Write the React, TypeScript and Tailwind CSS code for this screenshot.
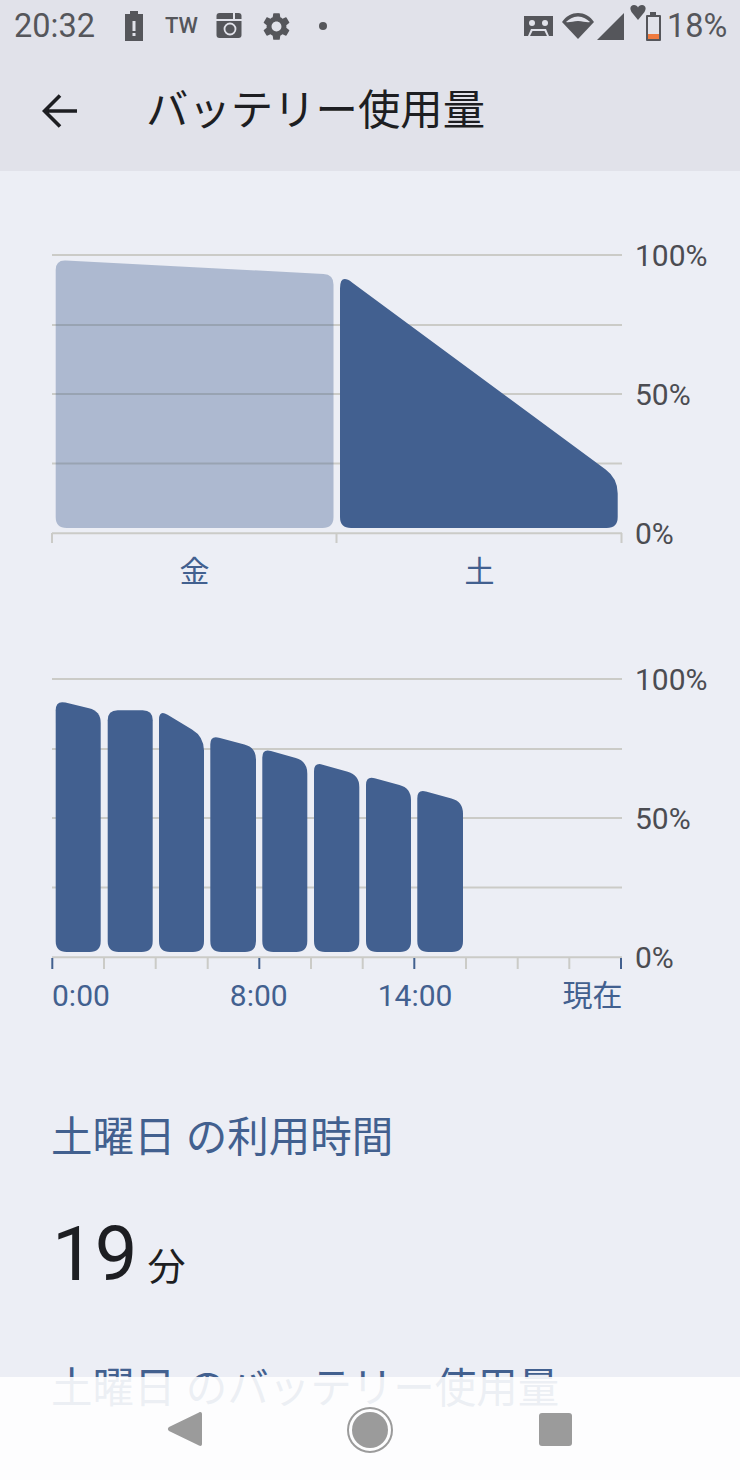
import { MdSettings } from "react-icons/md";

type Pt = [number, number, number];

// polygon with individually rounded corners
function roundedPath(pts: Pt[]) {
  const n = pts.length;
  let d = "";
  pts.forEach(([x, y, r], i) => {
    const [px, py] = pts[(i - 1 + n) % n];
    const [nx, ny] = pts[(i + 1) % n];
    const lp = Math.hypot(px - x, py - y);
    const ln = Math.hypot(nx - x, ny - y);
    const ax = x + ((px - x) / lp) * r;
    const ay = y + ((py - y) / lp) * r;
    const bx = x + ((nx - x) / ln) * r;
    const by = y + ((ny - y) / ln) * r;
    d += `${i === 0 ? "M" : "L"}${ax} ${ay}Q${x} ${y} ${bx} ${by}`;
  });
  return d + "Z";
}

type Bar = { x0: number; x1: number; yl: number; yr: number; rl?: number; rr?: number; faded?: boolean };

const BAR_BOTTOM = 287;
const gridLines = [14, 84, 153, 222.5];

const dayBars: Bar[] = [
  { x0: 55.7, x1: 333.5, yl: 260, yr: 274.5, rl: 10, rr: 10, faded: true },
  { x0: 340, x1: 617.7, yl: 273.5, yr: 478.5, rl: 15, rr: 15 },
];

const hourBars: Bar[] = [
  { x0: 55.7, x1: 100.7, yl: 700.3, yr: 711, rl: 10, rr: 12 },
  { x0: 107.7, x1: 152.7, yl: 710.3, yr: 710.3, rl: 10, rr: 10 },
  { x0: 159, x1: 204, yl: 709.6, yr: 736.6, rl: 10, rr: 14 },
  { x0: 210.3, x1: 256, yl: 735.3, yr: 747.6, rl: 9, rr: 12 },
  { x0: 262.3, x1: 307.3, yl: 748.5, yr: 761.4, rl: 9, rr: 12 },
  { x0: 314, x1: 359.3, yl: 762.2, yr: 774.9, rl: 9, rr: 12 },
  { x0: 366, x1: 411, yl: 775.9, yr: 788, rl: 9, rr: 12 },
  { x0: 417.3, x1: 463, yl: 789.2, yr: 801.5, rl: 9, rr: 12 },
];

const dayTicks = [{ x: 52 }, { x: 336.5 }, { x: 621.5 }];
const hourTicks = [52.3, 104, 155.7, 207.7, 259.3, 311, 362.7, 414.3, 466, 517.7, 569.3, 621].map((x, i) => ({
  x,
  major: i === 0 || i === 4 || i === 7 || i === 11,
}));

function Chart({ bars, top, ticks, tickEnd }: { bars: Bar[]; top: number; ticks: { x: number; major?: boolean }[]; tickEnd: number }) {
  return (
    <div className="flex">
      <svg width={590} height={308} viewBox="0 0 590 308" className="ml-[50px] shrink-0">
        {gridLines.map((y) => (
          <line key={y} x1={2} x2={572} y1={y} y2={y} stroke="#cbcbc7" strokeWidth={2} />
        ))}
        <line x1={2} x2={572} y1={292.3} y2={292.3} stroke="#cbcbc7" strokeWidth={2} />
        {ticks.map((t) => (
          <line
            key={t.x}
            x1={t.x - 50}
            x2={t.x - 50}
            y1={t.major ? 293 : 292}
            y2={tickEnd}
            stroke={t.major ? "#42608f" : "#cbcbc7"}
            strokeWidth={2}
          />
        ))}
        {bars.map((b) => (
          <path
            key={b.x0}
            d={roundedPath([
              [b.x0 - 50, b.yl - top, b.rl ?? 8],
              [b.x1 - 50, b.yr - top, b.rr ?? 8],
              [b.x1 - 50, BAR_BOTTOM, 11],
              [b.x0 - 50, BAR_BOTTOM, 11],
            ])}
            fill="#426090"
            fillOpacity={b.faded ? 0.37 : 1}
          />
        ))}
      </svg>
      <div className="ml-[-5px] flex h-[308px] flex-col justify-between text-[30px] leading-[30px] text-[#4b4c52]">
        <span>100%</span>
        <span>50%</span>
        <span>0%</span>
      </div>
    </div>
  );
}

function StatusBar() {
  return (
    <div className="flex h-[52px] items-center pl-[14px] text-[#55565b]">
      <span className="w-[81px] text-[32.5px] leading-[52px]">20:32</span>
      <svg width={20} height={30} viewBox="0 0 20 30" className="ml-[29px]">
        <path d="M6 0h8v3h5v27H1V3h5z" fill="#55565b" />
        <rect x={8.5} y={10} width={3} height={10} fill="#e1e2ea" />
        <rect x={8.5} y={22} width={3} height={3} fill="#e1e2ea" />
      </svg>
      <span className="ml-[21px] text-[22px] font-medium leading-[52px]">TW</span>
      <svg width={26} height={26} viewBox="0 0 26 26" className="ml-[18px]">
        <rect x={0.5} y={0} width={25} height={25} rx={3} fill="#55565b" />
        <rect x={0} y={6} width={26} height={2} fill="#e1e2ea" />
        <rect x={17} y={0} width={2} height={7} fill="#e1e2ea" />
        <circle cx={14} cy={16} r={5.5} fill="none" stroke="#e1e2ea" strokeWidth={1.8} />
        <rect x={3} y={10} width={3} height={13} fill="#55565b" />
      </svg>
      <MdSettings size={33} className="ml-[18px] text-[#55565b]" />
      <span className="ml-[26px] h-[8px] w-[8px] rounded-full bg-[#55565b]" />
      <svg width={30} height={21} viewBox="0 0 30 21" className="ml-[197px]">
        <path d="M0 0h29v20H25l-3-7H7l-3 7H0z" fill="#55565b" />
        <circle cx={8} cy={7} r={3} fill="#e1e2ea" />
        <circle cx={21} cy={7} r={3} fill="#e1e2ea" />
        <path d="M6 20l2.500-5h12l2.500 5z" fill="#55565b" />
      </svg>
      <svg width={32} height={28} viewBox="0 0 32 28" className="ml-[8px]">
        <path d="M16 27L0 10C4 4 10 1 16 1s12 3 16 9z" fill="#55565b" />
        <path d="M4 10c3-3 7-5.500 12-5.500S25 7 28 10c-3 1-7-1-12-1s-9 2-12 1z" fill="#e1e2ea" />
      </svg>
      <svg width={28} height={27} viewBox="0 0 28 27" className="ml-[3px]">
        <path d="M27 0v27H0z" fill="#55565b" />
      </svg>
      <svg width={34} height={38} viewBox="0 0 34 38" className="ml-[5px] mt-[-8px]">
        <path d="M8 17L1.500 9C-1 5 1 2 4 2c2 0 3.500 1 4 2.500C8.500 3 10 2 12 2c3 0 5 3 2.500 7z" fill="#55565b" />
        <path d="M20 9h6v3h4a1 1 0 011 1v24a1 1 0 01-1 1H17a1 1 0 01-1-1V13a1 1 0 011-1h3z" fill="#55565b" />
        <rect x={18} y={14} width={11} height={22} fill="#e1e2ea" />
        <rect x={18} y={31} width={11} height={5} fill="#ee7a3f" />
      </svg>
      <span className="ml-[3px] text-[32.5px] leading-[52px]">18%</span>
    </div>
  );
}

export default function App() {
  return (
    <div className="relative flex h-[1480px] w-[740px] flex-col overflow-hidden bg-[#eceef5] [font-family:Roboto,'Noto_Sans_CJK_JP',sans-serif]">
      <header className="h-[171px] shrink-0 bg-[#e1e2ea]">
        <StatusBar />
        <div className="flex h-[117px] items-center">
          <svg width={36} height={36} viewBox="0 0 36 36" className="ml-[42px]">
            <path d="M35 18H3M18 2.500L2.500 18 18 33.500" fill="none" stroke="#1d1e22" strokeWidth={3.6} />
          </svg>
          <h1 className="ml-[68px] text-[42.4px] font-normal leading-[56px] text-[#1d1e22]">バッテリー使用量</h1>
        </div>
      </header>

      <main className="flex flex-col pt-[70px]">
        <Chart bars={dayBars} top={241} ticks={dayTicks} tickEnd={302} />
        <div className="ml-[52px] mt-[3px] grid w-[570px] grid-cols-2 text-center text-[30px] leading-[40px] text-[#42608f]">
          <span>金</span>
          <span>土</span>
        </div>

        <div className="mt-[73px]">
          <Chart bars={hourBars} top={665} ticks={hourTicks} tickEnd={304} />
        </div>
        <div className="ml-[52px] mt-[5px] flex text-[30px] leading-[36px] text-[#42608f]">
          <span>0:00</span>
          <span className="ml-[120px]">8:00</span>
          <span className="ml-[90px]">14:00</span>
          <span className="ml-[110px]">現在</span>
        </div>

        <section className="ml-[51px] mt-[99px]">
          <h2 className="text-[41.5px] font-normal leading-[50px] text-[#42608f]">土曜日 の利用時間</h2>
          <div className="ml-[1px] mt-[51px] flex items-baseline leading-[80px] text-[#1d1e22]">
            <span className="text-[76px]">19</span>
            <span className="ml-[10px] text-[38px]">分</span>
          </div>
          <h2 className="mt-[57px] text-[41.5px] font-normal leading-[50px] text-[#42608f]">土曜日 のバッテリー使用量</h2>
        </section>
      </main>

      <nav className="absolute bottom-0 left-0 flex h-[103px] w-full items-start bg-white/90 pt-[30px]">
        <svg width={36} height={38} viewBox="0 0 36 38" className="ml-[167px] mt-[3px]">
          <path d="M32 2.500c1.500-1 3-.3 3 1.500v30c0 1.800-1.500 2.500-3 1.500L2 21c-1.500-1-1.500-3 0-4z" fill="#9b9b9b" />
        </svg>
        <svg width={46} height={46} viewBox="0 0 46 46" className="ml-[144px]">
          <circle cx={23} cy={23} r={22} fill="none" stroke="#9b9b9b" strokeWidth={2} />
          <circle cx={23} cy={23} r={18} fill="#9b9b9b" />
        </svg>
        <div className="ml-[146px] mt-[6px] h-[33px] w-[33px] rounded-[3px] bg-[#9b9b9b]" />
      </nav>
    </div>
  );
}
